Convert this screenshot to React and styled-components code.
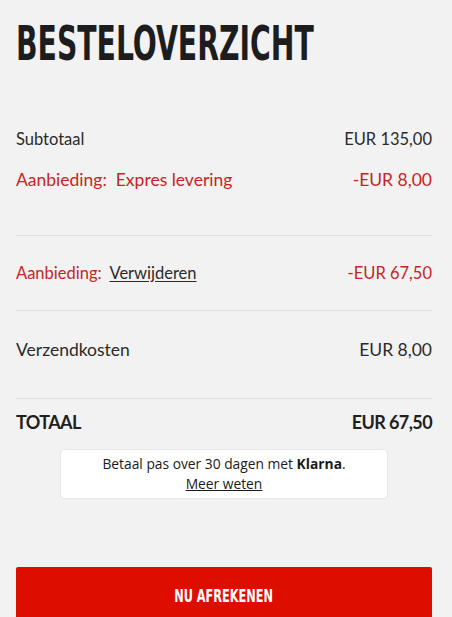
import styled, { createGlobalStyle } from "styled-components";

const GlobalStyle = createGlobalStyle`
  body {
    margin: 0;
    background: #f2f2f2;
    font-family: Lato, "Open Sans", sans-serif;
  }
`;

export default function App() {
  return (
    <>
      <GlobalStyle />
      <Wrapper>
        <Title>BESTELOVERZICHT</Title>
        <Section>
          <Row height={40}>
            <Label size={16.5}>Subtotaal</Label>
            <Amount size={16.5}>EUR 135,00</Amount>
          </Row>
          <Row height={40} red>
            <Label size={17.5}>Aanbieding:&nbsp; Expres levering</Label>
            <Amount size={17.5}>-EUR 8,00</Amount>
          </Row>
        </Section>
        <Divider />
        <Row height={74}>
          <Label size={16.5} red>
            Aanbieding:&nbsp;&nbsp;<RemoveLink>Verwijderen</RemoveLink>
          </Label>
          <Amount size={16.5} red>-EUR 67,50</Amount>
        </Row>
        <Divider />
        <Shipping>
          <Row height={32}>
            <Label size={17.5}>Verzendkosten</Label>
            <Amount size={17.5}>EUR 8,00</Amount>
          </Row>
        </Shipping>
        <Divider />
        <Row height={46}>
          <Total>TOTAAL</Total>
          <Total>EUR 67,50</Total>
        </Row>
        <KlarnaBox>
          <span>
            Betaal pas over 30 dagen met <strong>Klarna</strong>.
          </span>
          <KlarnaLink>Meer weten</KlarnaLink>
        </KlarnaBox>
        <CheckoutButton>
          <span>NU AFREKENEN</span>
        </CheckoutButton>
      </Wrapper>
    </>
  );
}

const Wrapper = styled.div`
  padding: 0 20px 0 16px;
  overflow: hidden;
`;
const Title = styled.h1`
  margin: 0;
  padding-top: 19px;
  height: 119px;
  box-sizing: border-box;
  font-family: "Liberation Sans Narrow", "DejaVu Sans Condensed", sans-serif;
  font-weight: 700;
  font-size: 48px;
  line-height: 1;
  color: #1d1d1f;
  transform: scaleX(0.655);
  transform-origin: left top;
  white-space: nowrap;
`;
const Section = styled.div`
  padding-bottom: 36px;
`;
const Row = styled.div`
  display: flex;
  justify-content: space-between;
  align-items: center;
  height: ${(p) => p.height}px;
  color: ${(p) => (p.red ? "#c62525" : "#2b2b2b")};
`;
const Label = styled.span`
  font-size: ${(p) => p.size}px;
  color: ${(p) => (p.red ? "#c62525" : "inherit")};
`;
const Amount = styled.span`
  font-size: ${(p) => p.size}px;
  color: ${(p) => (p.red ? "#c62525" : "inherit")};
`;
const RemoveLink = styled.a`
  color: #2b2b2b;
  text-decoration: underline;
  text-underline-offset: 2px;
  cursor: pointer;
`;
const Divider = styled.hr`
  margin: 0;
  border: 0;
  border-top: 1px solid #dedede;
`;
const Shipping = styled.div`
  padding: 22px 0 33px;
`;
const Total = styled.span`
  font-size: 18px;
  font-weight: 700;
  letter-spacing: -0.6px;
  color: #1f1f1f;
`;
const KlarnaBox = styled.div`
  margin: 4px 0 0 44px;
  width: 328px;
  height: 50px;
  box-sizing: border-box;
  display: flex;
  flex-direction: column;
  align-items: center;
  justify-content: center;
  background: #fff;
  border: 1px solid #e8e8e8;
  border-radius: 5px;
  font-family: "Open Sans", sans-serif;
  font-size: 13.8px;
  line-height: 20px;
  color: #1a1a1a;
  strong {
    font-weight: 700;
  }
`;
const KlarnaLink = styled.a`
  color: #1a1a1a;
  text-decoration: underline;
  cursor: pointer;
`;
const CheckoutButton = styled.button`
  display: flex;
  align-items: center;
  justify-content: center;
  width: 100%;
  height: 56px;
  margin-top: 68px;
  border: 0;
  border-radius: 2px;
  background: #dd0e00;
  color: #fff;
  font-family: "Liberation Sans Narrow", "DejaVu Sans Condensed", sans-serif;
  font-weight: 700;
  font-size: 18px;
  span {
    display: inline-block;
    transform: scaleX(0.7);
  }
`;
